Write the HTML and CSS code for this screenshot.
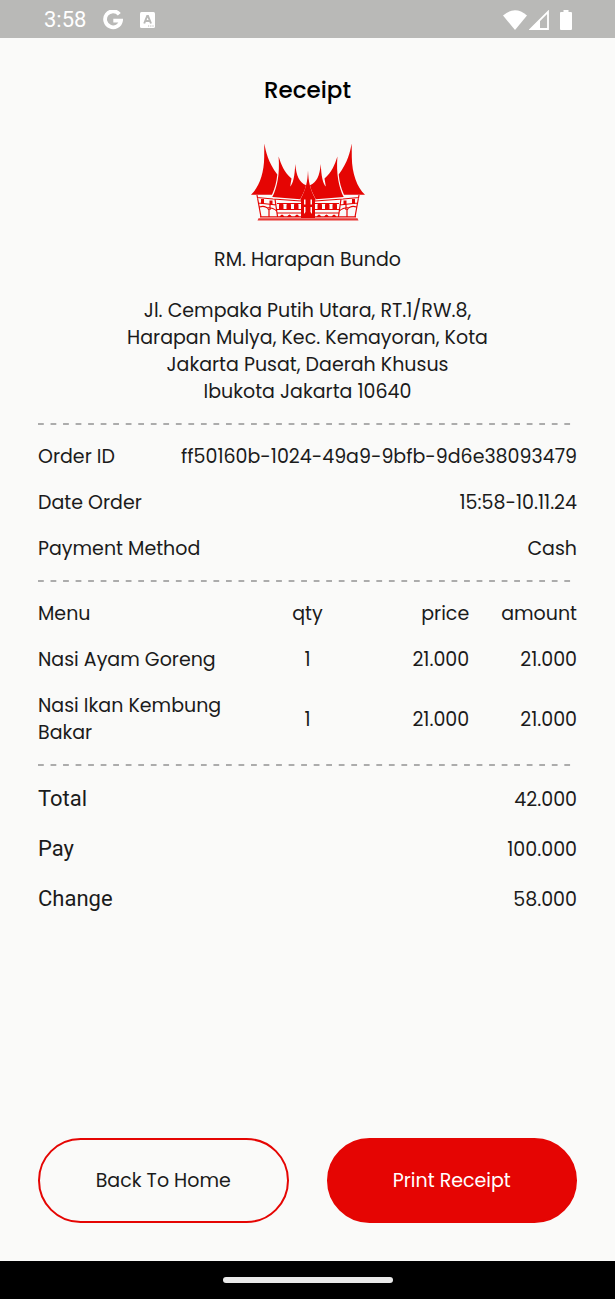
FILE: index.html
```html
<!DOCTYPE html>
<html lang="en">
<head>
<meta charset="utf-8">
<meta name="viewport" content="width=device-width, initial-scale=1">
<title>Receipt</title>
<link rel="stylesheet" href="styles.css">
</head>
<body>
<div class="screen">
  <header class="status-bar">
    <div class="status-left">
      <span class="clock">3:58</span>
      <svg class="icon-google" width="20" height="20" viewBox="0 0 20 20" aria-hidden="true"><path d="M16.300 4.200A8 8 0 1 0 18 10.600H10.300" fill="none" stroke="#fff" stroke-width="3.800"/></svg>
      <svg class="icon-keyboard" width="15" height="16" viewBox="0 0 15 16" aria-hidden="true"><rect width="15" height="16" rx="1.500" fill="#fff"/><path d="M4.200 11.500 7.200 4h.8l3 7.500M5.300 9h4.600" fill="none" stroke="#b9b9b7" stroke-width="2"/><path d="M8 14h6" stroke="#b9b9b7" stroke-width="1" stroke-dasharray="1.200 1"/></svg>
    </div>
    <div class="status-right">
      <svg width="24" height="20" viewBox="0 0 24 20" aria-hidden="true"><path d="M0 5.500Q12-5 24 5.500L12 20Z" fill="#fff"/></svg>
      <svg width="20" height="20" viewBox="0 0 20 20" aria-hidden="true"><path d="M19 1.800V19H1.800Z" fill="none" stroke="#fff" stroke-width="1.800"/><path d="M1 19.500 11 9.500v10Z" fill="#fff"/></svg>
      <svg class="icon-battery" width="12" height="20" viewBox="0 0 12 20" aria-hidden="true"><path d="M3.500 0h5v2H11q1 0 1 1v16q0 1-1 1H1q-1 0-1-1V3q0-1 1-1h2.500Z" fill="#fff"/></svg>
    </div>
  </header>

  <main class="receipt">
    <h1 class="title">Receipt</h1>
    <svg class="logo" width="116" height="80" viewBox="0 0 116 80" role="img" aria-label="RM. Harapan Bundo">
      <defs>
        <g id="wing">
          <path d="M14.300 1.500C16 10 18 20 27.300 32.500C26.500 40 25 46 22 52.800H1C9 45 14 32 14.200 15Z"/>
          <path d="M28.600 14.500C31 22 34 30 41.500 36.500L40.200 44.500C43 42 44.800 34 45.200 22C46.500 34 49 40 56 43.300C55 48 53 52 50.200 57.200L22.300 55C27 46 30 32 28.600 14.500Z"/>
          <g fill="none" stroke="#e50503" stroke-width="1.200">
            <path d="M7 53 11 75M7 55.500l16 1.500 28 2M25 57l2.500 17.500M8.500 61l18 2M9.500 65q6-2 9.500 3v7M16 65.500q8 0 11 4M27 61.500h25M27 67.500h25M27 71h25M10 74.800h42M20 63v5"/>
          </g>
          <path d="M11 57h3v5h-3zM19.500 58.500h3v4.500h-3zM29 67.500v-5q2.200-3 4.500 0v5zM36.500 67.500v-5q2.200-3 4.500 0v5zM44 67.500v-5q2.200-3 4.500 0v5zM29.500 75q2.500-5 5 0zM37 75q2.500-5 5 0zM44.500 75q2.500-5 5 0z"/>
          <path d="M8.500 76.200H58V78.500H7.500Z" fill-opacity=".8"/>
        </g>
      </defs>
      <g fill="#e50503">
        <use href="#wing"/>
        <use href="#wing" transform="translate(116 0) scale(-1 1)"/>
        <path d="M58 28.500C58.500 40 60 47 65.500 57L65 60V76H51V60L50.500 57C56 47 57.500 40 58 28.500Z"/>
      </g>
      <path d="M54 57.500h1.500v5H54zM60.500 57.500H62v5H60.500zM54 65h1.500v5l-1.500 2zM60.500 65H62v7l-1.500-2z" fill="#fafaf9"/>
    </svg>
    <p class="store">RM. Harapan Bundo</p>
    <address class="address">Jl. Cempaka Putih Utara, RT.1/RW.8,<br>Harapan Mulya, Kec. Kemayoran, Kota<br>Jakarta Pusat, Daerah Khusus<br>Ibukota Jakarta 10640</address>

    <hr class="divider">
    <dl class="details">
      <div class="row"><dt>Order ID</dt><dd>ff50160b-1024-49a9-9bfb-9d6e38093479</dd></div>
      <div class="row"><dt>Date Order</dt><dd>15:58-10.11.24</dd></div>
      <div class="row"><dt>Payment Method</dt><dd>Cash</dd></div>
    </dl>
    <hr class="divider">
    <table class="items">
      <thead>
        <tr><th class="menu" scope="col">Menu</th><th class="qty" scope="col">qty</th><th scope="col">price</th><th scope="col">amount</th></tr>
      </thead>
      <tbody>
        <tr><td class="menu">Nasi Ayam Goreng</td><td class="qty">1</td><td>21.000</td><td>21.000</td></tr>
        <tr><td class="menu">Nasi Ikan Kembung Bakar</td><td class="qty">1</td><td>21.000</td><td>21.000</td></tr>
      </tbody>
    </table>
    <hr class="divider">
    <dl class="totals">
      <div class="row"><dt>Total</dt><dd>42.000</dd></div>
      <div class="row"><dt>Pay</dt><dd>100.000</dd></div>
      <div class="row"><dt>Change</dt><dd>58.000</dd></div>
    </dl>
  </main>

  <div class="actions">
    <button class="button button-outline" type="button">Back To Home</button>
    <button class="button button-filled" type="button">Print Receipt</button>
  </div>
  <footer class="nav-bar"><div class="nav-handle"></div></footer>
</div>
</body>
</html>
```

FILE: styles.css
```css
* {
  box-sizing: border-box;
}

body {
  margin: 0;
  background: #fafaf9;
  color: #1b1b1b;
  font: 19px/27px Poppins, Inter, sans-serif;
}

.screen {
  display: flex;
  flex-direction: column;
  min-height: 100vh;
}

.status-bar {
  display: flex;
  justify-content: space-between;
  align-items: center;
  height: 38px;
  padding: 2px 43px 0 44px;
  background: #b9b9b7;
  color: #fff;
}

.status-left,
.status-right {
  display: flex;
  align-items: center;
}

.status-left {
  gap: 17px;
}

.status-right {
  gap: 2px;
}

.clock {
  font: 22px/30px Roboto, sans-serif;
}

.icon-battery {
  margin-left: 9px;
}

.receipt {
  flex: 1;
  padding: 38px 38px 0;
}

.title {
  margin: 0 0 38px;
  color: #000;
  font-size: 23px;
  font-weight: 500;
  line-height: 28px;
  text-align: center;
}

.logo {
  display: block;
  margin: 0 auto 24px;
}

.store {
  margin: 0 0 24px;
  text-align: center;
}

.address {
  font-style: normal;
  text-align: center;
}

.divider {
  height: 2px;
  margin: 18px 6px 18px 0;
  border: 0;
  background: linear-gradient(90deg, #acacac 50%, transparent 50%) 0 0 / calc((100% + 6px) / 43) 2px;
}

.details,
.totals {
  display: flex;
  flex-direction: column;
  margin: 0;
}

.details {
  gap: 19px;
}

.totals {
  gap: 20px;
}

.row {
  display: flex;
  justify-content: space-between;
  align-items: center;
}

.row dd {
  margin: 0;
}

.totals dt {
  font: 22px/30px Roboto, sans-serif;
}

.items {
  width: 100%;
  border-spacing: 0;
  table-layout: fixed;
}

.items th,
.items td {
  padding: 19px 0 0;
  font-weight: 400;
  text-align: right;
}

.items th {
  padding-top: 0;
}

.items .menu {
  width: 40%;
  text-align: left;
}

.items .qty {
  text-align: center;
}

.actions {
  display: flex;
  gap: 38px;
  padding: 38px;
}

.button {
  flex: 1;
  height: 85px;
  border: 2px solid #e50503;
  border-radius: 43px;
  color: #1b1b1b;
  font: inherit;
}

.button-outline {
  background: transparent;
}

.button-filled {
  background: #e50503;
  color: #fff;
}

.nav-bar {
  display: flex;
  justify-content: center;
  align-items: center;
  height: 38px;
  background: #000;
}

.nav-handle {
  width: 170px;
  height: 6px;
  border-radius: 3px;
  background: #eaeaea;
}
```
